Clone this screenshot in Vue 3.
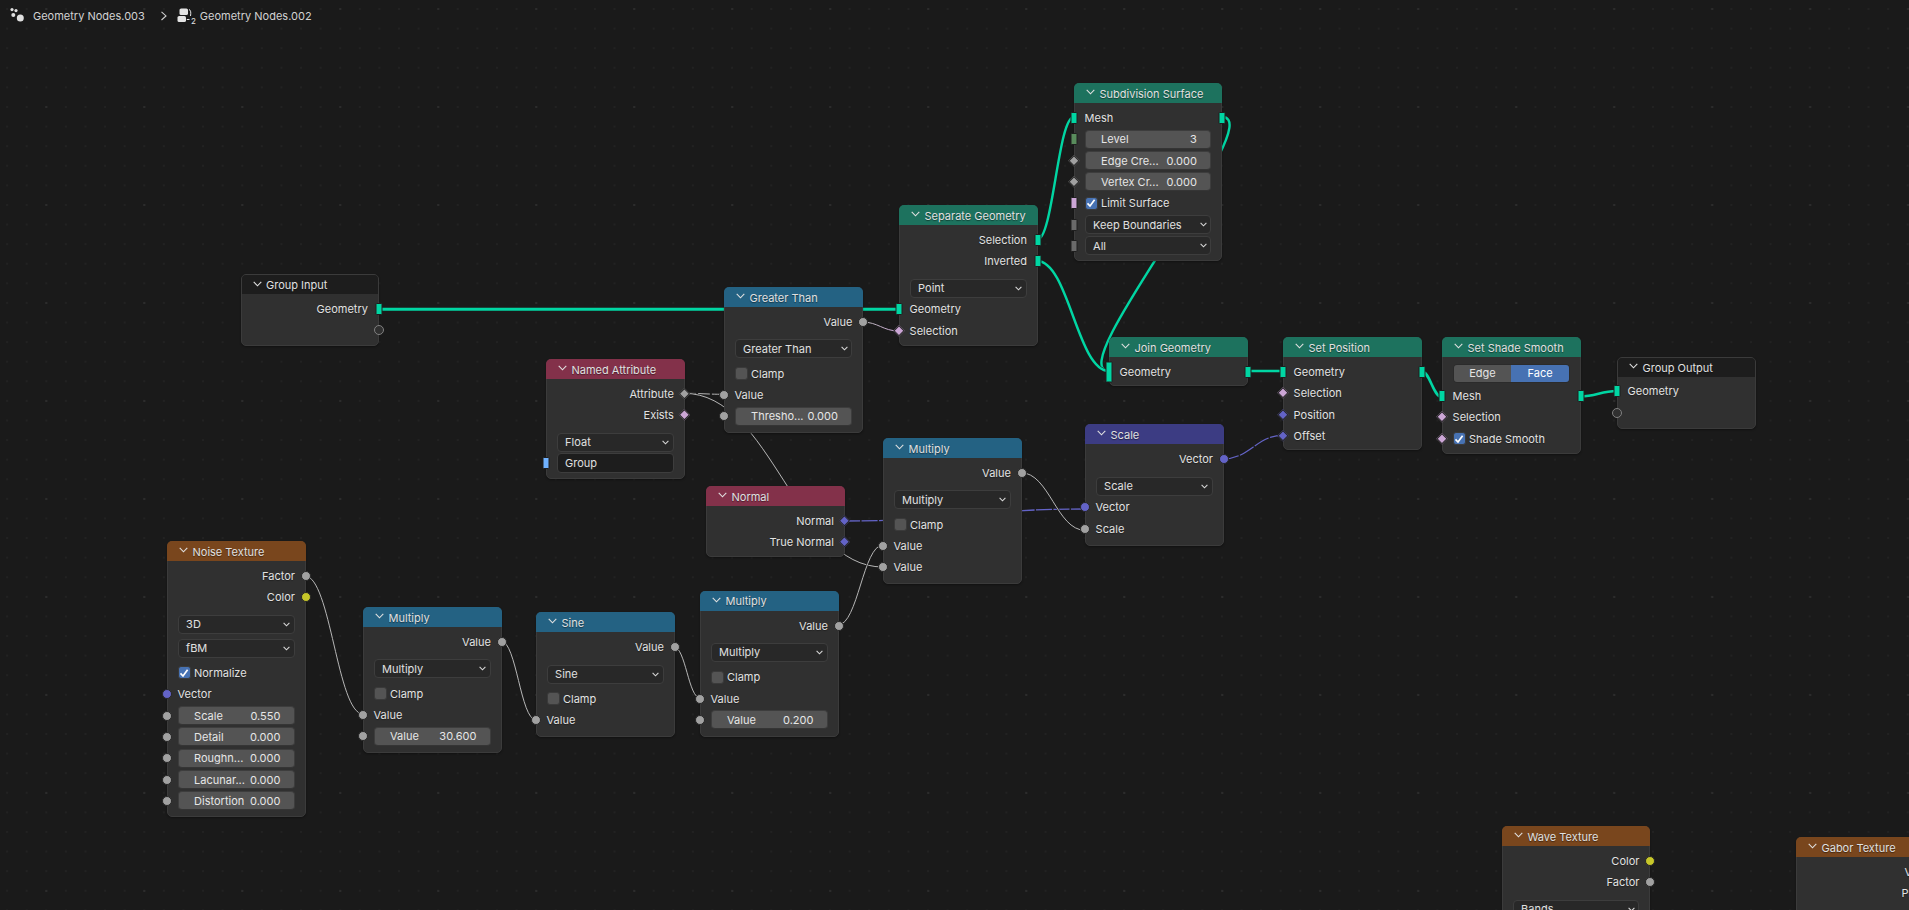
<script setup>
const C = (t, v) => ({ k: 'num', t, v, sl: 'circle float' })
const D = (t, v) => ({ k: 'num', t, v, sl: 'diamond float' })
const out = (t, s) => ({ k: 'out', t, sr: s })
const inp = (t, s) => ({ k: 'in', t, sl: s })
const dd = (t, gap = 'gap-sep', sl) => ({ k: 'dd', t, gap, sl })
const chk = (t, on, gap, sl) => ({ k: 'chk', t, on, gap, sl })
const clamp = () => chk('Clamp', false, 'gap-chk')
const val = inp('Value', 'circle float')

const mathNode = (title, x, y, h, op, rows) => ({
  title, x, y, w: 138.5, h, head: 'h-conv',
  rows: [out('Value', 'circle float'), dd(op), clamp(), ...rows]
})

const nodes = [
  { title: 'Group Input', x: 240.5, y: 274, w: 138, h: 72, head: 'h-group',
    rows: [out('Geometry', 'rect geo'), { k: 'out', t: '', sr: 'ring' }] },
  { title: 'Subdivision Surface', x: 1074, y: 83, w: 148, h: 178, head: 'h-geo',
    rows: [
      { k: 'in', t: 'Mesh', sl: 'rect geo', sr: 'rect geo' },
      { k: 'num', t: 'Level', v: '3', sl: 'rect int' },
      D('Edge Cre...', '0.000'),
      D('Vertex Cr...', '0.000'),
      chk('Limit Surface', true, '', 'rect bool'),
      dd('Keep Boundaries', '', 'rect menu'),
      dd('All', '', 'rect menu')
    ] },
  { title: 'Separate Geometry', x: 899, y: 205, w: 138.5, h: 141, head: 'h-geo',
    rows: [
      out('Selection', 'rect geo'), out('Inverted', 'rect geo'), dd('Point'),
      inp('Geometry', 'rect geo'), inp('Selection', 'diamond bool')
    ] },
  { title: 'Join Geometry', x: 1109, y: 337, w: 138.5, h: 48.5, head: 'h-geo',
    rows: [{ k: 'in', t: 'Geometry', sl: 'multi geo', sr: 'rect geo' }] },
  { title: 'Set Position', x: 1283, y: 337, w: 139, h: 113, head: 'h-geo',
    rows: [
      { k: 'in', t: 'Geometry', sl: 'rect geo', sr: 'rect geo' },
      inp('Selection', 'diamond bool'), inp('Position', 'diamond vec'), inp('Offset', 'diamond vec')
    ] },
  { title: 'Set Shade Smooth', x: 1442, y: 337, w: 138.5, h: 116.5, head: 'h-geo',
    rows: [
      { k: 'toggle', a: 'Edge', b: 'Face' },
      { k: 'in', t: 'Mesh', sl: 'rect geo', sr: 'rect geo' },
      inp('Selection', 'diamond bool'),
      chk('Shade Smooth', true, '', 'diamond bool')
    ] },
  { title: 'Group Output', x: 1617, y: 356.5, w: 139, h: 72, head: 'h-group',
    rows: [inp('Geometry', 'rect geo'), { k: 'in', t: '', sl: 'ring' }] },
  { title: 'Greater Than', x: 724, y: 287, w: 139, h: 146, head: 'h-conv',
    rows: [out('Value', 'circle float'), dd('Greater Than'), clamp(), val, C('Thresho...', '0.000')] },
  { title: 'Named Attribute', x: 546, y: 359, w: 138.5, h: 120, head: 'h-input',
    rows: [
      out('Attribute', 'diamond float'), out('Exists', 'diamond bool'), dd('Float'),
      { k: 'str', t: 'Group', sl: 'rect string' }
    ] },
  { title: 'Normal', x: 706, y: 486, w: 138.5, h: 71, head: 'h-input',
    rows: [out('Normal', 'diamond vec'), out('True Normal', 'diamond vec')] },
  { ...mathNode('Multiply', 883, 438, 145.5, 'Multiply', [val, val]) },
  { title: 'Scale', x: 1085, y: 424.3, w: 138.5, h: 121.5, head: 'h-vec',
    rows: [out('Vector', 'circle vec'), dd('Scale'), inp('Vector', 'circle vec'), inp('Scale', 'circle float')] },
  { title: 'Noise Texture', x: 167, y: 541, w: 138.5, h: 276, head: 'h-tex',
    rows: [
      out('Factor', 'circle float'), out('Color', 'circle col'), dd('3D'), dd('fBM', 'gap-dd'),
      chk('Normalize', true, 'gap-chk'), inp('Vector', 'circle vec'),
      C('Scale', '0.550'), C('Detail', '0.000'), C('Roughn...', '0.000'), C('Lacunar...', '0.000'), C('Distortion', '0.000')
    ] },
  { ...mathNode('Multiply', 363, 607, 146, 'Multiply', [val, C('Value', '30.600')]) },
  { title: 'Sine', x: 536, y: 612.3, w: 138.5, h: 124.5, head: 'h-conv',
    rows: [out('Value', 'circle float'), dd('Sine'), clamp(), val] },
  { ...mathNode('Multiply', 700, 590.7, 146, 'Multiply', [val, C('Value', '0.200')]) },
  { title: 'Wave Texture', x: 1502, y: 826, w: 148, h: 120, head: 'h-tex',
    rows: [out('Color', 'circle col'), out('Factor', 'circle float'), dd('Bands')] },
  { title: 'Gabor Texture', x: 1796, y: 837, w: 148, h: 120, head: 'h-tex',
    rows: [out('Value', 'circle float'), out('Phase', 'circle float')] }
]

const GEO = '#00d6a3', FLOAT = '#b4b4b4', VEC = '#6363c7', BOOL = '#cca6d6'
const links = [
  [378, 309.3, 899, 309.3, GEO, GEO, 3],
  [1037, 240, 1074, 117, GEO, GEO, 2.4],
  [1222, 117, 1109, 371, GEO, GEO, 2.4],
  [1037, 261, 1109, 371, GEO, GEO, 2.4],
  [1247, 371, 1283, 371, GEO, GEO, 2.6],
  [1421, 371, 1442, 397, GEO, GEO, 2.6],
  [1580, 396.5, 1617, 391, GEO, GEO, 2.6],
  [862, 322, 899, 331, FLOAT, BOOL, 1],
  [684, 393.3, 724, 394.3, FLOAT, FLOAT, 1, '12 2'],
  [684, 393.3, 883, 567, FLOAT, FLOAT, 1],
  [844, 521, 1085, 509, VEC, VEC, 1.3, '16 1.5'],
  [1021, 472.7, 1085, 530.3, FLOAT, FLOAT, 1],
  [1223, 459, 1283, 435.3, VEC, VEC, 1.2, '16 1.5'],
  [305, 576, 363, 714, FLOAT, FLOAT, 1],
  [501, 641, 536, 720, FLOAT, FLOAT, 1],
  [674, 647, 700, 698, FLOAT, FLOAT, 1],
  [838, 625, 883, 545, FLOAT, FLOAT, 1]
].map(([x1, y1, x2, y2, c1, c2, w, dash], i) => {
  const d = Math.abs(x2 - x1) * 0.44
  return {
    id: 'wire' + i, x1, y1, x2, y2, c1, c2, w, dash,
    path: `M${x1} ${y1}C${x1 + d} ${y1} ${x2 - d} ${y2} ${x2} ${y2}`
  }
})

const nodeBox = n => ({ left: n.x + 'px', top: n.y + 'px', width: n.w + 'px', height: n.h + 'px' })
</script>

<template>
  <div class="editor">
    <div class="crumbs">
      <svg class="ico-a" width="18" height="18" viewBox="0 0 18 18">
        <circle cx="3" cy="2.6" r="1.6" />
        <circle cx="7" cy="3.6" r="1.6" />
        <circle cx="4.3" cy="8" r="2" />
        <circle cx="11.3" cy="11" r="3.5" />
      </svg>
      <span class="crumb">Geometry Nodes.003</span>
      <svg class="sep-ico" width="8" height="10" viewBox="0 0 8 10">
        <path d="M1.5 .8L6 4.9L1.5 9" fill="none" stroke="#d0d0d0" stroke-width="1.1" />
      </svg>
      <svg class="ico-b" width="20" height="18" viewBox="0 0 20 18">
        <rect x="2.5" y="1.5" width="8.5" height="6.5" rx="1.6" fill="#e4e4e4" />
        <rect x="0.5" y="9" width="8.5" height="6" rx="1.6" fill="#e4e4e4" />
        <path d="M12 2.5C14 3 14 6 13.5 9M9.8 12.5H12.5" fill="none" stroke="#e4e4e4" stroke-width="1" />
        <text x="14" y="16.5" class="ico-num">2</text>
      </svg>
      <span class="crumb">Geometry Nodes.002</span>
    </div>

    <svg class="wires" width="1909" height="910">
      <defs>
        <linearGradient v-for="l in links" :id="l.id" :key="l.id" gradientUnits="userSpaceOnUse"
          :x1="l.x1" :y1="l.y1" :x2="l.x2" :y2="l.y2">
          <stop offset="0" :stop-color="l.c1" />
          <stop offset="1" :stop-color="l.c2" />
        </linearGradient>
      </defs>
      <g v-for="l in links" :key="l.id" fill="none">
        <path :d="l.path" stroke="#1c1c1c" :stroke-width="l.w + 1" />
        <path :d="l.path" :stroke="`url(#${l.id})`" :stroke-width="l.w" :stroke-dasharray="l.dash" />
      </g>
    </svg>

    <div v-for="n in nodes" :key="n.title + n.x" class="node" :style="nodeBox(n)">
      <div class="head" :class="n.head">
        <svg class="chev" width="9" height="6" viewBox="0 0 9 6">
          <path d="M.7 .8L4.5 4.8L8.3 .8" fill="none" stroke="#e0e0e0" stroke-width="1.1" />
        </svg>
        <span class="title">{{ n.title }}</span>
      </div>
      <div class="body">
        <div v-for="(r, i) in n.rows" :key="i" class="row" :class="['row-' + r.k, r.gap]">
          <i v-if="r.sl" class="sock left" :class="r.sl"></i>
          <i v-if="r.sr" class="sock right" :class="r.sr"></i>

          <span v-if="r.k === 'in' || r.k === 'out'" class="lbl">{{ r.t }}</span>

          <div v-else-if="r.k === 'dd'" class="drop">
            <span>{{ r.t }}</span>
            <svg width="7" height="5" viewBox="0 0 7 5">
              <path d="M.6 .9L3.5 3.8L6.4 .9" fill="none" stroke="#d8d8d8" stroke-width="1.1" />
            </svg>
          </div>

          <div v-else-if="r.k === 'chk'" class="check">
            <span class="box" :class="{ on: r.on }">
              <svg v-if="r.on" width="10" height="10" viewBox="0 0 10 10">
                <path d="M1.5 5.4L4 8L8.6 1.8" fill="none" stroke="#fff" stroke-width="1.7" />
              </svg>
            </span>
            <span class="lbl">{{ r.t }}</span>
          </div>

          <div v-else-if="r.k === 'num'" class="num">
            <span>{{ r.t }}</span>
            <span>{{ r.v }}</span>
          </div>

          <div v-else-if="r.k === 'str'" class="str">{{ r.t }}</div>

          <div v-else-if="r.k === 'toggle'" class="seg">
            <span>{{ r.a }}</span>
            <span class="active">{{ r.b }}</span>
          </div>
        </div>
      </div>
    </div>
  </div>
</template>

<style>
html, body { margin: 0; background: #1a1a1a; }
</style>

<style scoped>
.editor {
  position: relative;
  width: 100%;
  height: 910px;
  overflow: hidden;
  font-family: Inter, "Liberation Sans", sans-serif;
  font-size: 11px;
  color: #e2e2e2;
  background-color: #1a1a1a;
  background-image:
    radial-gradient(circle at center, #2c2c2c 0 1px, transparent 1.2px),
    radial-gradient(circle at center, #222 0 .7px, transparent 1px);
  background-size: 98px 98px, 19.6px 19.6px;
  background-position: -2.7px -40px, -2.7px -0.8px;
}
.crumbs {
  display: flex;
  align-items: center;
  height: 32px;
  padding-left: 9px;
}
.ico-a { fill: #e0e0e0; margin-right: 6px; }
.crumb { color: #d2d2d2; font-size: 11px; }
.sep-ico { margin: 0 9px 0 15px; }
.ico-b { margin-right: 3px; }
.ico-num { font-size: 8px; fill: #e4e4e4; }
.wires { position: absolute; left: 0; top: 0; }
.node {
  position: absolute;
  box-sizing: border-box;
  background: #303030;
  border: 1px solid #3b3b3b;
  border-radius: 5px;
  box-shadow: 0 1px 2px rgba(0, 0, 0, .35);
}
.head {
  display: flex;
  align-items: center;
  height: 20px;
  margin: -1px -1px 0;
  padding-left: 12px;
  border-radius: 5px 5px 0 0;
  box-sizing: border-box;
}
.chev { margin-right: 4.5px; margin-top: -2px; flex: none; }
.title { padding-top: 1px; color: #e0e0e0; text-shadow: 0 1px 1px rgba(0, 0, 0, .45); white-space: nowrap; }
.h-geo { background: #1d725e; }
.h-conv { background: #246283; }
.h-input { background: #83314a; }
.h-tex { background: #79461d; }
.h-vec { background: #3c3c83; }
.h-group {
  background: #1d1d1d;
  height: 19px;
  margin: 0;
  padding-left: 11px;
  border-radius: 4px 4px 0 0;
}
.body { padding-top: 4.33px; }
.row {
  position: relative;
  display: flex;
  align-items: center;
  height: 21.33px;
  padding: 0 9.6px;
  white-space: nowrap;
}
.gap-sep { margin-top: 5.4px; }
.gap-dd { margin-top: 2.7px; }
.gap-chk { margin-top: 3.6px; }
.row-out { justify-content: flex-end; }
.row-toggle { height: 24px; }
.lbl { color: #e2e2e2; text-shadow: 0 1px 1px rgba(0, 0, 0, .35); }
.drop, .num, .str, .seg {
  flex: 1;
  box-sizing: border-box;
  height: 19px;
  display: flex;
  align-items: center;
  border-radius: 4px;
}
.drop {
  justify-content: space-between;
  padding: 0 3.5px 0 7.5px;
  background: #282828;
  border: 1px solid #3d3d3d;
  color: #e0e0e0;
}
.num {
  justify-content: space-between;
  padding: 0 13.5px 0 15.5px;
  background: #545454;
  border: 1px solid #3d3d3d;
  border-bottom-color: #353535;
  color: #e6e6e6;
}
.str {
  padding-left: 7.5px;
  height: 20px;
  background: #1d1d1d;
  border: 1px solid #3d3d3d;
  color: #e0e0e0;
}
.seg {
  overflow: hidden;
  border: 1px solid #2b2b2b;
  color: #e4e4e4;
}
.seg span {
  flex: 1;
  height: 100%;
  display: flex;
  align-items: center;
  justify-content: center;
  background: #545454;
}
.seg .active { background: #4772b3; color: #fff; }
.check { display: flex; align-items: center; gap: 3.4px; }
.box {
  box-sizing: border-box;
  width: 13px;
  height: 13px;
  display: flex;
  align-items: center;
  justify-content: center;
  background: #545454;
  border: 1px solid #3a3a3a;
  border-radius: 3px;
}
.box.on { background: #4772b3; }
.sock {
  position: absolute;
  top: 50%;
  box-sizing: border-box;
  z-index: 2;
}
.sock.left { left: -1px; transform: translate(-50%, -50%); }
.sock.right { right: -1px; transform: translate(50%, -50%); }
.sock.circle { width: 10px; height: 10px; border-radius: 50%; border: 1px solid #262626; }
.sock.rect { width: 7px; height: 12px; border: 1px solid #1e1e1e; border-radius: 1px; }
.sock.multi { width: 7px; height: 21px; border: 1px solid #1e1e1e; border-radius: 1px; }
.sock.ring { width: 10px; height: 10px; border-radius: 50%; background: #303030; border: 1px solid #808080; }
.sock.diamond { width: 8.4px; height: 8.4px; border: 1px solid #262626; }
.sock.left.diamond { transform: translate(-50%, -50%) rotate(45deg); }
.sock.right.diamond { transform: translate(50%, -50%) rotate(45deg); }
.geo { background: #00d6a3; }
.float { background: #a1a1a1; }
.vec { background: #6363c7; }
.bool { background: #cca6d6; }
.col { background: #c7c729; }
.string { background: #70b2ff; }
.int { background: #598c5c; }
.menu { background: #6a6a6a; }
</style>
